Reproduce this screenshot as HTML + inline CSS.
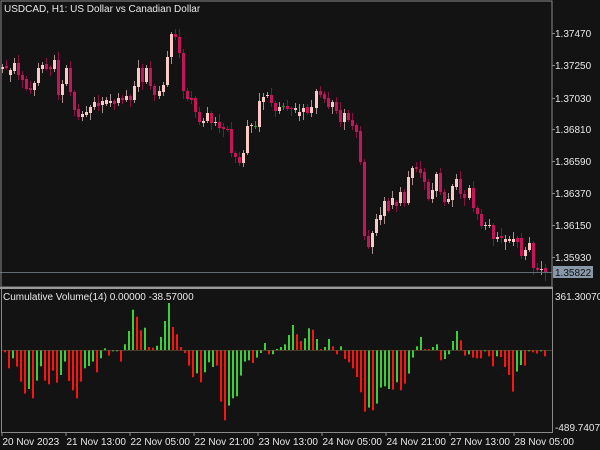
<!DOCTYPE html>
<html><head><meta charset="utf-8"><style>
html,body{margin:0;padding:0;background:#131313;width:600px;height:450px;overflow:hidden}
svg{display:block}
text{font-family:"Liberation Sans",sans-serif;font-size:10px;fill:#e8e8e8}
</style></head><body>
<svg id="s" width="600" height="450" viewBox="0 0 600 450" xmlns="http://www.w3.org/2000/svg">
<rect width="600" height="450" fill="#131313"/>
<g id="c"></g>
<g id="h"></g>
<line x1="0" y1="272.5" x2="552" y2="272.5" stroke="#5f6b75" stroke-width="1"/>
<rect x="1" y="1" width="551" height="286" fill="none" stroke="#8a8a8a" stroke-width="1"/>
<rect x="0" y="287" width="553" height="2" fill="#9a9a9a"/>
<line x1="1.5" y1="289" x2="1.5" y2="432" stroke="#8a8a8a"/>
<line x1="552.5" y1="289" x2="552.5" y2="432" stroke="#8a8a8a"/>
<line x1="1" y1="432.5" x2="553" y2="432.5" stroke="#8a8a8a"/>
<text x="4" y="12">USDCAD, H1:  US Dollar vs Canadian Dollar</text>
<text x="3" y="300">Cumulative Volume(14) 0.00000 -38.57000</text>
<g id="ax"></g>
<rect x="553" y="266" width="40" height="12" fill="#8898a8"/>
<text x="555" y="276" style="fill:#101010">1.35822</text>
<text x="555" y="300">361.30070</text>
<text x="555" y="431">-489.74070</text>
</svg>
<script>
var C=[[67,69,1],[66,68,0],[70,75,1],[63,71,1],[63,75,0],[75,80,0],[79,89,0],[88,90,0],[83,90,1],[68,83,1],[65,69,1],[64,69,0],[67,69,0],[60,69,1],[60,95,0],[84,95,1],[68,84,1],[68,92,0],[92,110,0],[109,117,0],[114,117,1],[112,115,1],[107,113,1],[102,107,1],[103,106,0],[101,105,1],[100,104,1],[101,103,1],[101,104,0],[98,103,1],[98,100,0],[96,100,1],[96,100,0],[86,100,1],[68,87,1],[68,82,0],[68,82,1],[68,86,0],[86,95,0],[91,96,1],[85,92,1],[57,85,1],[34,57,1],[34,37,0],[37,53,0],[53,91,0],[91,99,0],[98,100,0],[98,112,0],[112,122,0],[121,123,1],[113,121,1],[113,123,0],[122,123,1],[122,128,0],[127,129,0],[129,130,0],[129,153,0],[153,157,0],[157,163,0],[153,163,1],[126,153,1],[125,126,1],[126,126,2],[101,127,1],[97,102,1],[95,96,1],[95,103,0],[103,111,0],[107,111,1],[106,106,2],[106,109,0],[108,109,0],[108,110,1],[112,116,1],[108,112,1],[107,113,0],[107,113,1],[91,108,1],[91,95,0],[94,99,0],[98,107,0],[102,107,1],[102,111,0],[110,122,0],[113,122,1],[113,120,0],[120,126,0],[125,132,0],[131,162,0],[162,236,0],[236,247,0],[233,247,1],[219,233,1],[215,220,1],[201,216,1],[201,211,0],[198,205,1],[202,206,0],[192,203,1],[192,203,0],[177,203,1],[168,178,1],[167,169,0],[169,173,0],[172,182,0],[182,199,0],[190,199,1],[174,191,1],[173,192,0],[192,202,0],[199,202,1],[186,200,1],[179,187,1],[179,194,0],[194,198,0],[188,198,1],[188,208,0],[208,214,0],[214,226,0],[225,226,1],[225,226,1],[225,239,0],[237,239,1],[236,238,0],[239,242,1],[239,241,1],[239,242,1],[238,242,0],[238,256,0],[250,256,1],[243,250,1],[243,268,0],[268,270,0],[269,270,1],[268,273,0]];
var g=document.getElementById('c'),s='';
var n=C.length,sp=(545-1.5)/(n-1);
for(var i=0;i<n;i++){var c=C[i],x=Math.round(1.5+i*sp),t=c[0],b=c[1];
var up=[3,6,2,5,8,4,3,7,2,5][i%10],dn=[4,2,7,3,5,8,2,4,6,3][i%10];
var col=c[2]==1?'#f9c9c6':(c[2]==2?'#1aa01a':'#c4145a'),wc=c[2]==1?'#a89090':(c[2]==2?'#1aa01a':'#8a1040');
s+='<line x1="'+(x+.5)+'" y1="'+(t-up)+'" x2="'+(x+.5)+'" y2="'+(b+dn)+'" stroke="'+wc+'"/>';
s+='<rect x="'+(x-1)+'" y="'+t+'" width="3" height="'+Math.max(1,b-t)+'" fill="'+col+'"/>';}
g.innerHTML=s;
var H1="r202 r250 g220 r245 r290 r326 g312 r340 g287 g244 r287 r298 r257 r293 g270 g230 r288 r316 r340 r290 g250 g243 g230 r262 g220 g190 r212 g197 g197 r230 g178 g138 g74 r95 r136 g128 r186 r188 g182 g156 g108 g54 r126 r148 r186 r204 r242 r277 g265 r292 g262 g232 g246 r242 r350 r406 g362 g340 g334 g272 g230 g226 r234 g218 g204 g174 r208 g208 g192 g186 g178 g150 g120 r148";
var H2="r168 g160 g130 r134 g162 r192 g186 g162 r184 r208 g184 r222 r232 r250 r276 r322 r380 g368 r376 g356 g308 g304 g312 r314 g292 r316 r296 g266 g218 g184 g156 r192 r192 g186 g178 r226 g222 g208 g168 g138 r166 r212 g208 r218 r220 r220 g198 r214 r244 g214 r216 r246 r270 r320 g260 g240 r242 g198 r202 r206 g198 r214";
var hs='',base=285+196/3;
function drawH(str,x0,xs){var a=str.split(' ');for(var k=0;k<a.length;k++){var cc=a[k][0],z=+a[k].slice(1),y=285+z/3;var x=Math.round(x0+k*xs);
var t=Math.min(y,base),hh=Math.max(1,Math.abs(y-base));
hs+='<rect x="'+(x-1)+'" y="'+t.toFixed(1)+'" width="2" height="'+hh.toFixed(1)+'" fill="'+(cc=='g'?'#3ccf3c':'#fa1414')+'"/>';}}
drawH(H1,4.7,4);drawH(H2,301,4);
hs+='<line x1="2" y1="'+base+'" x2="552" y2="'+base+'" stroke="#6a5a30" stroke-width="0.6"/>';
document.getElementById('h').innerHTML=hs;
var ax='',P=[["1.37470",33],["1.37250",65],["1.37030",98],["1.36810",129],["1.36590",161],["1.36370",193],["1.36150",225],["1.35930",257]];
P.forEach(function(p){ax+='<line x1="552" y1="'+(p[1]+.5)+'" x2="555" y2="'+(p[1]+.5)+'" stroke="#8a8a8a"/><text x="555" y="'+(p[1]+4)+'">'+p[0]+'</text>';});
var D=["20 Nov 2023","21 Nov 13:00","22 Nov 05:00","22 Nov 21:00","23 Nov 13:00","24 Nov 05:00","24 Nov 21:00","27 Nov 13:00","28 Nov 05:00"];
D.forEach(function(d,k){var x=1.5+k*64;ax+='<line x1="'+(x+.5)+'" y1="432" x2="'+(x+.5)+'" y2="436" stroke="#8a8a8a"/><text x="'+(x+1)+'" y="445">'+d+'</text>';});
document.getElementById('ax').innerHTML=ax;
</script>
</body></html>
